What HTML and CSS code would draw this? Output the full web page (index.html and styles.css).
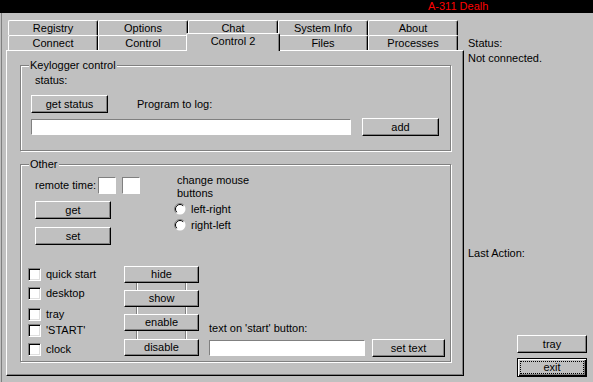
FILE: index.html
```html
<!DOCTYPE html>
<html>
<head>
<meta charset="utf-8">
<title>A-311 Death</title>
<link rel="stylesheet" href="styles.css">
</head>
<body>
<div class="window">
  <div class="title">A-311 Dealh</div>
  <div class="main">
    <div class="left">
      <div class="tabctl">
        <div class="tabrow">
          <div class="tab">Registry</div>
          <div class="tab">Options</div>
          <div class="tab">Chat</div>
          <div class="tab">System Info</div>
          <div class="tab">About</div>
        </div>
        <div class="tabrow">
          <div class="tab">Connect</div>
          <div class="tab">Control</div>
          <div class="tab tab-sel">Control 2</div>
          <div class="tab">Files</div>
          <div class="tab">Processes</div>
        </div>
        <div class="page">
          <div class="group g-key">
            <span class="legend">Keylogger control</span>
            <div class="k-status">status:</div>
            <div class="row k-row1">
              <button class="btn b-getstatus">get status</button>
              <span class="k-prog">Program to log:</span>
            </div>
            <div class="row k-row2">
              <div class="edit k-edit"></div>
              <button class="btn b-add">add</button>
            </div>
          </div>
          <div class="group g-other">
            <span class="legend">Other</span>
            <div class="o-top">
              <div class="o-left">
                <div class="row o-remote">
                  <span class="o-rt">remote time:</span>
                  <div class="edit o-box"></div>
                  <div class="edit o-box o-box2"></div>
                </div>
                <button class="btn o-btn o-get">get</button>
                <button class="btn o-btn o-set">set</button>
              </div>
              <div class="o-right">
                <div class="o-mouse">change mouse<br>buttons</div>
                <div class="radio r1"><svg width="12" height="12" viewBox="0 0 12 12"><circle cx="6" cy="6" r="5.5" fill="#fff"/><path d="M2.1 9.9 A5.5 5.5 0 0 1 9.9 2.1" stroke="#808080" fill="none"/><path d="M2.8 9.2 A4.5 4.5 0 0 1 9.2 2.8" stroke="#000" fill="none"/></svg><span>left-right</span></div>
                <div class="radio r2"><svg width="12" height="12" viewBox="0 0 12 12"><circle cx="6" cy="6" r="5.5" fill="#fff"/><path d="M2.1 9.9 A5.5 5.5 0 0 1 9.9 2.1" stroke="#808080" fill="none"/><path d="M2.8 9.2 A4.5 4.5 0 0 1 9.2 2.8" stroke="#000" fill="none"/></svg><span>right-left</span></div>
              </div>
            </div>
            <div class="o-bottom">
              <div class="checks">
                <div class="chk c1"><span class="box"></span><span class="lbl">quick start</span></div>
                <div class="chk c2"><span class="box"></span><span class="lbl">desktop</span></div>
                <div class="chk c3"><span class="box"></span><span class="lbl">tray</span></div>
                <div class="chk c4"><span class="box"></span><span class="lbl">'START'</span></div>
                <div class="chk c5"><span class="box"></span><span class="lbl">clock</span></div>
              </div>
              <div class="btncol">
                <button class="btn c-btn">hide</button>
                <div class="link"><span></span><span></span></div>
                <button class="btn c-btn">show</button>
                <div class="link"><span></span><span></span></div>
                <button class="btn c-btn">enable</button>
                <div class="link link8"><span></span><span></span></div>
                <button class="btn c-btn">disable</button>
              </div>
              <div class="textcol">
                <div class="t-label">text on 'start' button:</div>
                <div class="row t-row">
                  <div class="edit t-edit"></div>
                  <button class="btn b-settext">set text</button>
                </div>
              </div>
            </div>
          </div>
        </div>
      </div>
    </div>
    <div class="right">
      <div class="r-status">Status:</div>
      <div class="r-conn">Not connected.</div>
      <div class="r-last">Last Action:</div>
      <button class="btn r-btn r-tray">tray</button>
      <button class="btn r-btn r-exit"><span class="focus">exit</span></button>
    </div>
  </div>
</div>
</body>
</html>
```
FILE: styles.css
```css
html, body {
  margin: 0;
  padding: 0;
}
body {
  width: 593px;
  height: 382px;
  overflow: hidden;
  background: #c0c0c0;
  font-family: "Liberation Sans", Arial, sans-serif;
  font-size: 11px;
  line-height: 13px;
  color: #000;
}
.window {
  width: 593px;
  height: 382px;
}
.title {
  height: 13px;
  background: #000;
  color: #ff0000;
  line-height: 13px;
  padding-left: 428px;
  white-space: nowrap;
}
.main {
  display: flex;
  height: 369px;
}
.left {
  margin-left: 1px;
  border-left: 1px solid #808080;
  padding-left: 4px;
}
.tabctl {
  width: 458px;
  padding-top: 7px;
}
.tabrow {
  display: flex;
  height: 15px;
  padding-left: 2px;
}
.tab {
  box-sizing: border-box;
  width: 90px;
  height: 15px;
  border-top: 1px solid #fff;
  border-left: 1px solid #fff;
  border-right: 1px solid #000;
  box-shadow: inset -1px 0 #808080;
  border-radius: 2px 2px 0 0;
  text-align: center;
  line-height: 14px;
  background: #c0c0c0;
  white-space: nowrap;
}
.tab-sel {
  width: 94px;
  height: 18px;
  margin: -2px -2px 0 -2px;
  z-index: 2;
  line-height: 14px;
}
.page {
  box-sizing: border-box;
  width: 458px;
  height: 326px;
  border-top: 1px solid #fff;
  border-left: 1px solid #fff;
  border-right: 1px solid #000;
  border-bottom: 1px solid #000;
  box-shadow: inset -1px -1px #808080;
  padding-left: 13px;
  padding-top: 14px;
}
.group {
  box-sizing: border-box;
  width: 431px;
  border: 1px solid #808080;
  box-shadow: inset 1px 1px #fff, 1px 1px #fff;
}
.g-key {
  height: 86px;
}
.g-other {
  height: 198px;
  margin-top: 13px;
}
.legend {
  display: block;
  width: fit-content;
  margin: -7px 0 0 8px;
  padding: 0 1px;
  background: #c0c0c0;
  line-height: 13px;
  white-space: nowrap;
}
.row {
  display: flex;
  align-items: center;
}
.btn {
  display: block;
  box-sizing: border-box;
  margin: 0;
  padding: 0;
  background: #c0c0c0;
  border: 1px solid;
  border-color: #fff #000 #000 #fff;
  box-shadow: inset -1px -1px #808080;
  font-family: "Liberation Sans", Arial, sans-serif;
  font-size: 11px;
  line-height: 13px;
  color: #000;
  text-align: center;
  white-space: nowrap;
}
.edit {
  box-sizing: border-box;
  background: #fff;
  border: 1px solid;
  border-color: #808080 #fff #fff #808080;
}
/* keylogger */
.k-status {
  margin: 2px 0 0 14px;
}
.k-row1 {
  margin-top: 8px;
  height: 18px;
}
.b-getstatus {
  width: 77px;
  height: 18px;
  margin-left: 10px;
}
.k-prog {
  margin-left: 29px;
}
.k-row2 {
  margin-top: 5px;
  height: 18px;
}
.k-edit {
  width: 320px;
  height: 16px;
  margin-left: 10px;
}
.b-add {
  width: 77px;
  height: 18px;
  margin-left: 11px;
}
/* other */
.o-top {
  display: flex;
}
.o-left {
  width: 153px;
}
.o-remote {
  margin-top: 6px;
  height: 17px;
  padding-left: 14px;
}
.o-rt {
  width: 63px;
}
.o-box {
  width: 18px;
  height: 17px;
}
.o-box2 {
  margin-left: 6px;
}
.o-btn {
  width: 76px;
  height: 18px;
  margin-left: 14px;
}
.o-get {
  margin-top: 7px;
}
.o-set {
  margin-top: 8px;
}
.o-right {
  margin-top: 3px;
}
.o-mouse {
  padding-left: 3px;
}
.radio {
  display: flex;
  align-items: center;
  height: 12px;
}
.radio svg {
  display: block;
  flex: none;
}
.radio span {
  margin-left: 5px;
}
.r1 {
  margin-top: 3px;
}
.r2 {
  margin-top: 4px;
}
.o-bottom {
  display: flex;
  margin-top: 21px;
}
.checks {
  width: 96px;
  margin-left: 7px;
}
.chk {
  display: flex;
  align-items: center;
  height: 13px;
}
.box {
  box-sizing: border-box;
  display: block;
  width: 13px;
  height: 13px;
  background: #fff;
  border: 1px solid;
  border-color: #808080 #fff #fff #808080;
  box-shadow: inset 1px 1px #000, inset -1px -1px #dfdfdf;
  flex: none;
}
.lbl {
  margin-left: 5px;
}
.c1 { margin-top: 2px; }
.c2 { margin-top: 6px; }
.c3 { margin-top: 8px; }
.c4 { margin-top: 3px; }
.c5 { margin-top: 6px; }
.btncol {
  width: 75px;
}
.c-btn {
  width: 75px;
  height: 17px;
}
.link {
  display: flex;
  justify-content: space-between;
  height: 7px;
  padding: 0 12px;
}
.link8 {
  height: 8px;
}
.link span {
  display: block;
  width: 0;
  border-left: 1px solid #808080;
  border-right: 1px solid #fff;
}
.textcol {
  margin-left: 10px;
  padding-top: 56px;
}
.t-row {
  margin-top: 4px;
  height: 18px;
}
.t-edit {
  width: 156px;
  height: 16px;
}
.b-settext {
  width: 73px;
  height: 18px;
  margin-left: 7px;
}
/* right column */
.right {
  display: flex;
  flex-direction: column;
  padding-left: 4px;
  width: 125px;
}
.r-status {
  margin-top: 24px;
}
.r-conn {
  margin-top: 2px;
}
.r-last {
  margin-top: 182px;
}
.r-btn {
  width: 70px;
  margin-left: 49px;
}
.r-tray {
  height: 18px;
  margin-top: 75px;
}
.r-exit {
  height: 19px;
  margin-top: 5px;
  border: 1px solid #000;
  box-shadow: inset 1px 1px #fff, inset -1px -1px #000, inset -2px -2px #808080;
  padding: 2px 2px;
}
.focus {
  display: block;
  box-sizing: border-box;
  height: 13px;
  border: 1px dotted #000;
  line-height: 11px;
}
```
